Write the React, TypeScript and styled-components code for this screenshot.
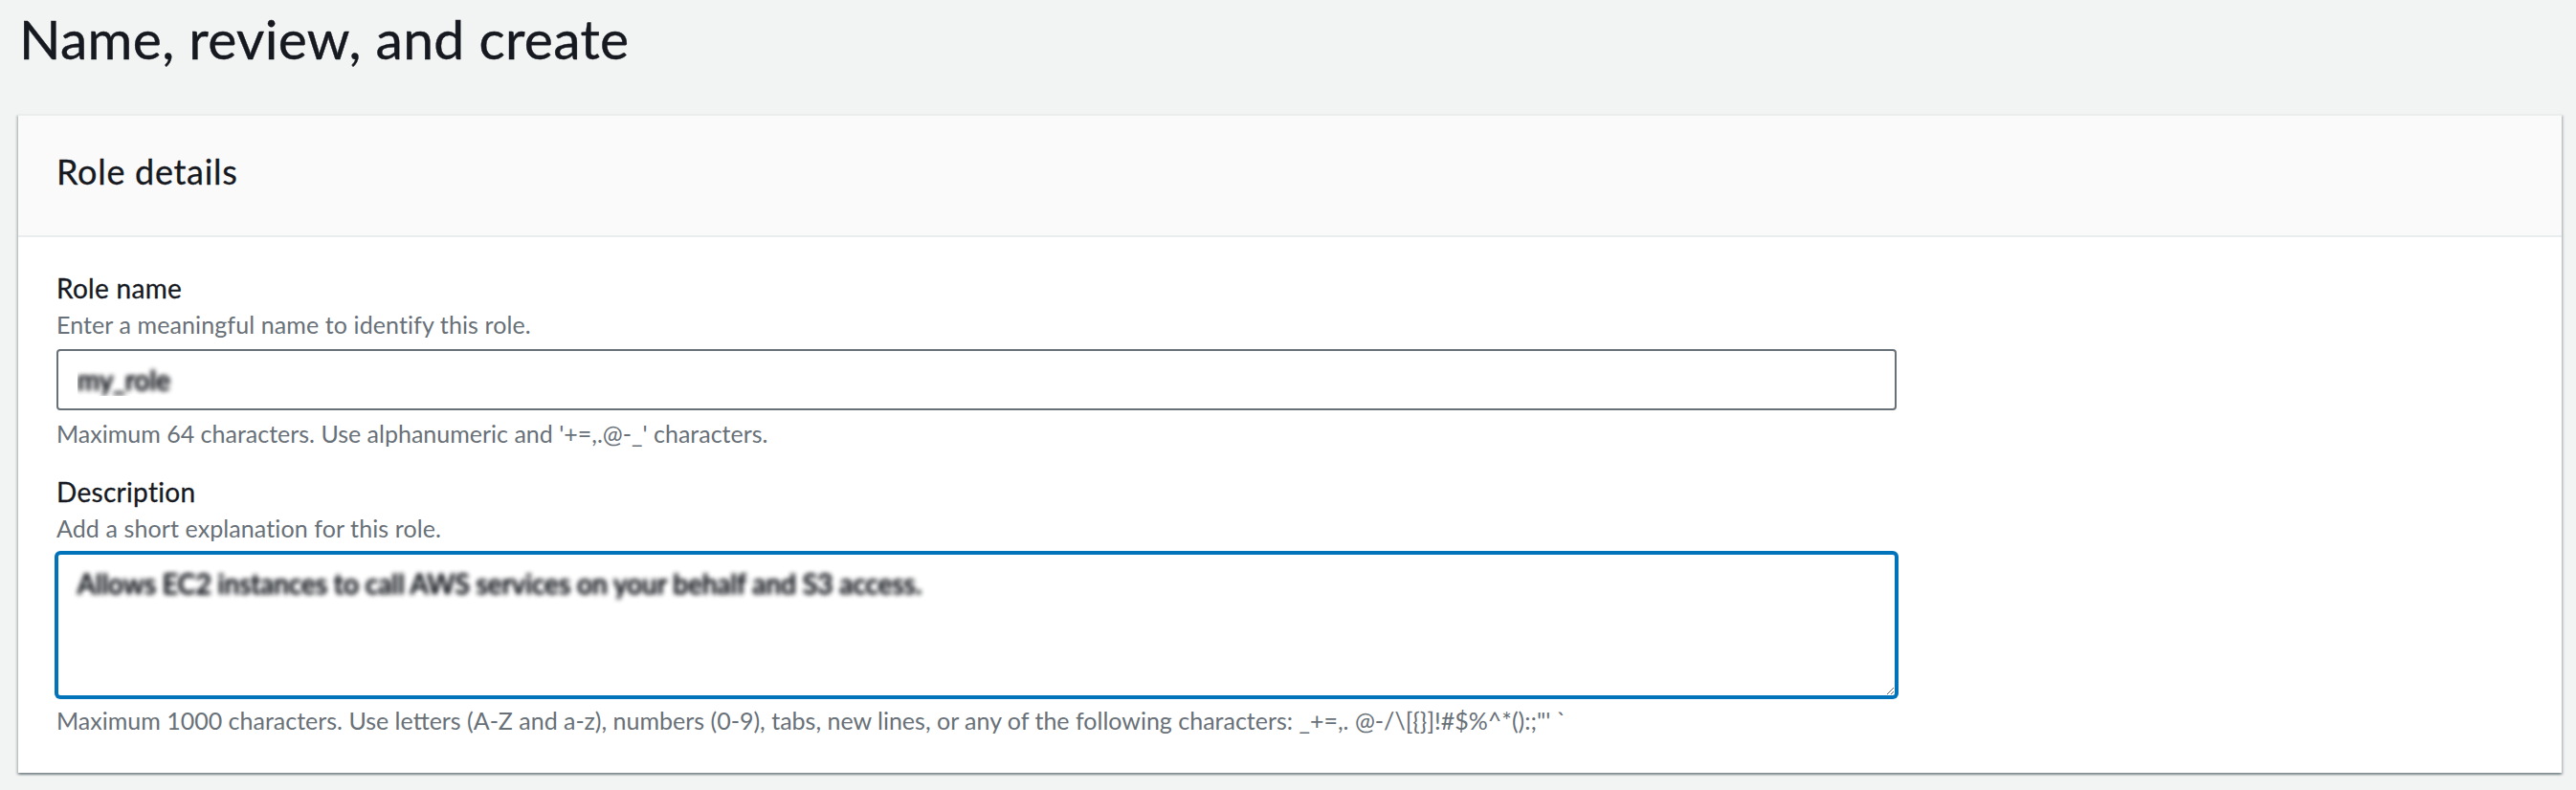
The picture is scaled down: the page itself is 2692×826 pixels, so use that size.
import React from "react";
import styled, { createGlobalStyle } from "styled-components";

const GlobalStyle = createGlobalStyle`
  html, body {
    margin: 0;
    padding: 0;
    background: #f2f3f3;
  }
  body {
    font-family: Lato, "Liberation Sans", Arial, sans-serif;
    color: #16191f;
  }
`;

const FIELDS = [
  {
    id: "role-name",
    label: "Role name",
    description: "Enter a meaningful name to identify this role.",
    value: "my_role",
    multiline: false,
    focused: false,
    constraint: "Maximum 64 characters. Use alphanumeric and '+=,.@-_' characters.",
  },
  {
    id: "role-description",
    label: "Description",
    description: "Add a short explanation for this role.",
    value: "Allows EC2 instances to call AWS services on your behalf and S3 access.",
    multiline: true,
    focused: true,
    constraint:
      "Maximum 1000 characters. Use letters (A-Z and a-z), numbers (0-9), tabs, new lines, or any of the following characters: _+=,. @-/\\[{}]!#$%^*():;\"' `",
  },
];

export default function App() {
  return (
    <>
      <GlobalStyle />
      <Page>
        <Title>Name, review, and create</Title>
        <Card>
          <CardHeader>
            <CardTitle>Role details</CardTitle>
          </CardHeader>
          <CardBody>
            {FIELDS.map((f) => (
              <Field key={f.id}>
                <Label htmlFor={f.id}>{f.label}</Label>
                <Description>{f.description}</Description>
                <Control>
                  {f.multiline ? (
                    <TextArea id={f.id} defaultValue={f.value} $focused={f.focused} spellCheck={false} />
                  ) : (
                    <Input id={f.id} defaultValue={f.value} spellCheck={false} />
                  )}
                </Control>
                <Constraint>{f.constraint}</Constraint>
              </Field>
            ))}
          </CardBody>
        </Card>
      </Page>
    </>
  );
}

// --- Styled Components ---

const Page = styled.main`
  padding: 6px 15px 18px 19px;
`;

const Title = styled.h1`
  margin: 0 0 45px;
  padding-left: 1px;
  font-size: 57px;
  line-height: 68px;
  font-weight: 400;
  letter-spacing: 0.3px;
  color: #16191f;
  -webkit-text-stroke: 0.4px #16191f;
`;

const Card = styled.section`
  background: #ffffff;
  border-top: 2px solid #eaeded;
  box-shadow: 0 2px 2px 0 rgba(0, 28, 36, 0.3), 2px 2px 2px 0 rgba(0, 28, 36, 0.15),
    -2px 2px 2px 0 rgba(0, 28, 36, 0.15);
`;

const CardHeader = styled.header`
  background: #fafafa;
  border-bottom: 2px solid #eaeded;
  padding: 36px 40px 45px;
`;

const CardTitle = styled.h2`
  margin: 0;
  font-size: 36px;
  line-height: 44px;
  font-weight: 400;
  letter-spacing: 0.7px;
  color: #16191f;
  -webkit-text-stroke: 0.3px #16191f;
`;

const CardBody = styled.div`
  display: flex;
  flex-direction: column;
  gap: 23px;
  padding: 31px 40px 39px;
`;

const Field = styled.div`
  display: flex;
  flex-direction: column;
  width: 1923px;
`;

const Label = styled.label`
  font-size: 28px;
  line-height: 44px;
  letter-spacing: 0.3px;
  color: #16191f;
  -webkit-text-stroke: 0.3px #16191f;
`;

const Description = styled.div`
  font-size: 25px;
  line-height: 32px;
  letter-spacing: 0.1px;
  color: #687078;
`;

const Control = styled.div`
  margin-top: 10px;
`;

/* the field values are pixelated in the reference, so they are drawn as a blur */
const controlBase = `
  box-sizing: border-box;
  width: 100%;
  margin: 0;
  padding: 8px 20px;
  background: #ffffff;
  border-radius: 4px;
  font-family: Lato, "Liberation Sans", Arial, sans-serif;
  font-size: 28px;
  line-height: 44px;
  color: transparent;
  text-shadow: 0 0 5px rgba(22, 25, 31, 0.9), 0 0 5px rgba(22, 25, 31, 0.9);
  outline: none;
`;

const Input = styled.input`
  ${controlBase}
  display: block;
  height: 64px;
  border: 2px solid #687078;
`;

const TextArea = styled.textarea<{ $focused: boolean }>`
  ${controlBase}
  display: block;
  height: 151px;
  resize: vertical;
  border: 2px solid ${({ $focused }) => ($focused ? "#0073bb" : "#687078")};
  box-shadow: ${({ $focused }) => ($focused ? "0 0 0 2px #0073bb" : "none")};
`;

const Constraint = styled.div`
  margin-top: 8px;
  font-size: 25px;
  line-height: 32px;
  color: #687078;
`;
